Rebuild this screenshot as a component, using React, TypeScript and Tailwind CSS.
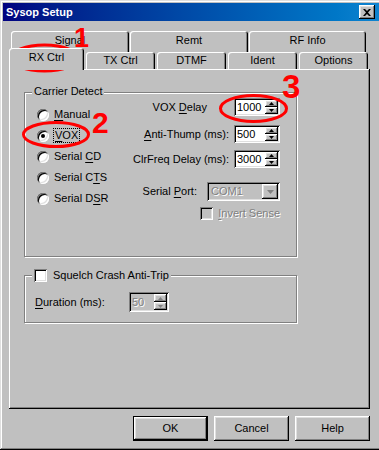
import React from 'react'

const raised =
  'shadow-[inset_-1px_-1px_#000,inset_1px_1px_#fff,inset_-2px_-2px_#808080,inset_2px_2px_#dfdfdf]'
const sunken =
  'shadow-[inset_1px_1px_#808080,inset_-1px_-1px_#fff,inset_2px_2px_#000,inset_-2px_-2px_#dfdfdf]'
const etched = 'border border-[#808080] shadow-[inset_1px_1px_#fff,1px_1px_#fff]'
const grayText = 'text-[#808080] [text-shadow:1px_1px_0_#fff]'

function Arrow({ up, disabled }: { up?: boolean; disabled?: boolean }) {
  const fill = disabled ? '#808080' : '#000'
  return (
    <svg width="5" height="3" viewBox="0 0 5 3" className="block">
      {up ? <path d="M2.5 0L5 3H0Z" fill={fill} /> : <path d="M0 0H5L2.5 3Z" fill={fill} />}
    </svg>
  )
}

function Spin({ disabled }: { disabled?: boolean }) {
  return (
    <div className="flex flex-col w-[13px] h-full">
      <div className={`flex-1 bg-[#c0c0c0] flex items-center justify-center ${raised}`}>
        <Arrow up disabled={disabled} />
      </div>
      <div className={`flex-1 bg-[#c0c0c0] flex items-center justify-center ${raised}`}>
        <Arrow disabled={disabled} />
      </div>
    </div>
  )
}

function SpinEdit({ value, width = 'w-[46px]', height = 'h-[18px]', disabled }: { value: string; width?: string; height?: string; disabled?: boolean }) {
  return (
    <div className={`${width} ${height} p-[2px] flex ${disabled ? 'bg-[#c0c0c0]' : 'bg-white'} ${sunken}`}>
      <span className={`flex-1 pl-[1px] flex items-center leading-[13px] ${disabled ? grayText : 'text-black'}`}>{value}</span>
      <Spin disabled={disabled} />
    </div>
  )
}

function Radio({ label, checked, focus }: { label: React.ReactNode; checked?: boolean; focus?: boolean }) {
  return (
    <div className="h-[21px] flex items-center">
      <div className={`w-[12px] h-[12px] rounded-full bg-white flex items-center justify-center ${sunken}`}>
        {checked && <div className="w-[4px] h-[4px] rounded-full bg-black" />}
      </div>
      {focus ? (
        <span className="ml-[4px] leading-[13px] border border-dotted border-black px-[1px]">{label}</span>
      ) : (
        <span className="ml-[5px] leading-[13px]">{label}</span>
      )}
    </div>
  )
}

function Check({ disabled }: { disabled?: boolean }) {
  return <div className={`w-[13px] h-[13px] shrink-0 ${disabled ? 'bg-[#c0c0c0]' : 'bg-white'} ${sunken}`} />
}

function U({ children }: { children: React.ReactNode }) {
  return <span className="underline underline-offset-[2px]">{children}</span>
}

function BackTab({ label, w }: { label: string; w: string }) {
  return (
    <div className={`${w} h-[21px] pt-[3px] text-center leading-[13px] rounded-t-[3px] bg-[#c0c0c0] shadow-[inset_1px_1px_#fff,inset_-1px_0_#000,inset_-2px_0_#808080]`}>
      {label}
    </div>
  )
}

function FrontTab({ label, selected }: { label: string; selected?: boolean }) {
  if (selected) {
    return (
      <div className="relative z-10 w-[75px] h-[22px] -mb-[1px] pt-[3px] text-center leading-[13px] rounded-t-[3px] bg-[#c0c0c0] shadow-[inset_1px_1px_#fff,inset_-1px_0_#000,inset_-2px_0_#808080]">
        {label}
      </div>
    )
  }
  return (
    <div className="w-[69px] h-[17px] ml-[2px] pt-[2px] text-center leading-[13px] rounded-t-[3px] bg-[#c0c0c0] shadow-[inset_1px_1px_#fff,inset_-1px_0_#000,inset_-2px_0_#808080]">
      {label}
    </div>
  )
}

function Button({ label, isDefault }: { label: string; isDefault?: boolean }) {
  return (
    <div className={`w-[75px] h-[25px] ${isDefault ? 'border border-black' : ''}`}>
      <div className={`w-full h-full flex items-center justify-center bg-[#c0c0c0] ${raised}`}>{label}</div>
    </div>
  )
}

export default function App() {
  return (
    <div className="relative w-[379px] h-[450px] overflow-hidden bg-[#c0c0c0] font-['Liberation_Sans',Arial,sans-serif] text-[11px] text-black">
      <div className="w-[382px] h-[450px] p-[3px] flex flex-col bg-[#c0c0c0] shadow-[inset_-1px_-1px_#000,inset_1px_1px_#dfdfdf,inset_-2px_-2px_#808080,inset_2px_2px_#fff]">
        {/* title bar */}
        <div className="h-[18px] flex items-center bg-gradient-to-r from-[#000080] to-[#1084d0] pl-[3px] pr-[4px]">
          <span className="flex-1 font-bold text-white leading-[13px]">Sysop Setup</span>
          <div className={`w-[16px] h-[14px] flex items-center justify-center bg-[#c0c0c0] ${raised}`}>
            <svg width="8" height="7" viewBox="0 0 8 7" className="block">
              <path d="M0 0h2l2 2 2-2h2L5 3.5 8 7H6L4 5 2 7H0l3-3.5Z" fill="#000" />
            </svg>
          </div>
        </div>

        {/* tabs */}
        <div className="ml-[6px] w-[361px] mt-[10px]">
          <div className="flex pl-[2px] gap-[1px]">
            <BackTab label="Signal" w="w-[118px]" />
            <BackTab label="Remt" w="w-[118px]" />
            <BackTab label="RF Info" w="w-[117px]" />
          </div>
          <div className="flex items-end h-[17px]">
            <FrontTab label="RX Ctrl" selected />
            <FrontTab label="TX Ctrl" />
            <FrontTab label="DTMF" />
            <FrontTab label="Ident" />
            <FrontTab label="Options" />
          </div>

          {/* panel */}
          <div className="h-[340px] pt-[23px] pl-[15px] bg-[#c0c0c0] shadow-[inset_-1px_-1px_#000,inset_1px_1px_#fff,inset_-2px_-2px_#808080]">
            <div className={`relative w-[273px] h-[165px] flex ${etched}`}>
              <span className="absolute -top-[8px] left-[7px] px-[2px] bg-[#c0c0c0] leading-[13px]">Carrier Detect</span>
              <div className="w-[100px] pl-[12px] pt-[11px] flex flex-col">
                <Radio label={<><U>M</U>anual</>} />
                <Radio label={<><U>V</U>OX</>} checked focus />
                <Radio label={<>Serial <U>C</U>D</>} />
                <Radio label={<>Serial C<U>T</U>S</>} />
                <Radio label={<>Serial D<U>S</U>R</>} />
              </div>
              <div className="flex-1 pr-[16px] pt-[5px] flex flex-col">
                <div className="h-[18px] flex items-center justify-end">
                  <span className="mr-[27px]">VOX <U>D</U>elay</span>
                  <SpinEdit value="1000" />
                </div>
                <div className="mt-[9px] h-[18px] flex items-center justify-end">
                  <span className="mr-[5px]"><U>A</U>nti-Thump (ms):</span>
                  <SpinEdit value="500" />
                </div>
                <div className="mt-[7px] h-[18px] flex items-center justify-end">
                  <span className="mr-[5px]">ClrFreq Delay (ms):</span>
                  <SpinEdit value="3000" />
                </div>
                <div className="mt-[14px] h-[19px] flex items-center justify-end">
                  <span className="mr-[10px]">Serial <U>P</U>ort:</span>
                  <div className={`w-[73px] h-[19px] p-[2px] flex bg-[#c0c0c0] ${sunken}`}>
                    <span className={`flex-1 pl-[2px] flex items-center leading-[13px] ${grayText}`}>COM1</span>
                    <div className={`w-[16px] h-full flex items-center justify-center bg-[#c0c0c0] ${raised}`}>
                      <svg width="7" height="4" viewBox="0 0 7 4" className="block">
                        <path d="M0 0H7L3.5 4Z" fill="#808080" />
                      </svg>
                    </div>
                  </div>
                </div>
                <div className="mt-[6px] flex items-center ml-[87px]">
                  <Check disabled />
                  <span className={`ml-[5px] leading-[13px] whitespace-nowrap ${grayText}`}><U>I</U>nvert Sense</span>
                </div>
              </div>
            </div>

            <div className={`relative mt-[18px] w-[273px] h-[48px] pt-[16px] pl-[10px] ${etched}`}>
              <div className="absolute -top-[7px] left-[7px] px-[2px] h-[13px] flex items-center bg-[#c0c0c0]">
                <Check />
                <span className="ml-[6px] leading-[13px]">Squelch Crash Anti-Trip</span>
              </div>
              <div className="flex items-center h-[20px]">
                <span className="w-[94px]"><U>D</U>uration (ms):</span>
                <SpinEdit value="50" width="w-[40px]" height="h-[20px]" disabled />
              </div>
            </div>
          </div>

          {/* buttons */}
          <div className="mt-[7px] flex justify-end gap-[6px]">
            <Button label="OK" isDefault />
            <Button label="Cancel" />
            <Button label="Help" />
          </div>
        </div>
      </div>

      {/* red annotations */}
      <svg className="absolute inset-0 pointer-events-none" width="379" height="450" viewBox="0 0 379 450">
        <ellipse cx="44.5" cy="58" rx="34" ry="13" fill="none" stroke="#ff0000" strokeWidth="3" />
        <ellipse cx="56" cy="134.5" rx="32.5" ry="12" fill="none" stroke="#ff0000" strokeWidth="3" />
        <ellipse cx="253.5" cy="108.5" rx="33" ry="13" fill="none" stroke="#ff0000" strokeWidth="3" />
        <text x="74" y="47" fontFamily="Liberation Sans, Arial, sans-serif" fontWeight="bold" fontSize="27" fill="#ff0000">1</text>
        <text x="92" y="133" fontFamily="Liberation Sans, Arial, sans-serif" fontWeight="bold" fontSize="30" fill="#ff0000">2</text>
        <text x="282" y="98" fontFamily="Liberation Sans, Arial, sans-serif" fontWeight="bold" fontSize="33" fill="#ff0000">3</text>
      </svg>
    </div>
  )
}
